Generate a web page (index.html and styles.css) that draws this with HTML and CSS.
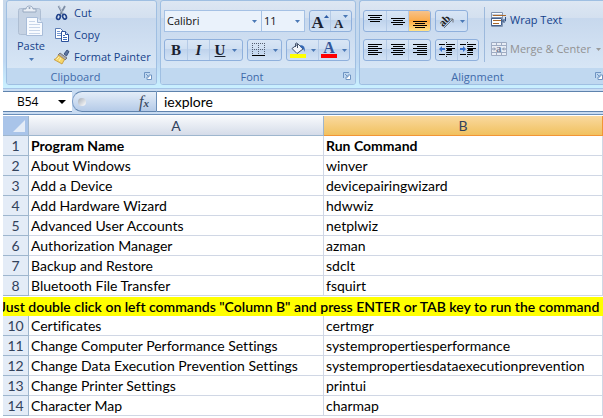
FILE: index.html
```html
<!DOCTYPE html>
<html lang="en">
<head>
<meta charset="utf-8">
<title>Run Commands</title>
<link rel="stylesheet" href="styles.css">
</head>
<body>
<svg width="0" height="0" class="defs" aria-hidden="true">
  <symbol id="arrow" viewBox="0 0 5 3"><path d="M0 0h5L2.500 3z"/></symbol>
  <symbol id="launcher" viewBox="0 0 8 8"><path d="M.5 6V.5H6" fill="none" stroke="#6f94c2"/><path d="M2 2l2.500 2.500" stroke="#6f94c2"/><path d="M7.500 3v4.500H3V5h2V3z" fill="#fff" stroke="#6f94c2"/></symbol>
</svg>
<main class="app">
  <header class="ribbon">
    <section class="group">
      <div class="tools clipboard">
        <button class="paste">
          <svg width="28" height="32" viewBox="0 0 28 32"><rect x="1.500" y="3.500" width="22" height="26" rx="2" fill="#c5d2e3" stroke="#aebed3"/><path d="M6 7V4h3c0-4 7-4 7 0h3v3z" fill="#e9eef5" stroke="#98a9c0"/><circle cx="12.500" cy="3" r="1" fill="#8fa1b8"/><path d="M9.500 12.500h11l5 5v13h-16z" fill="#f8fbff" stroke="#a9bdd9"/><path d="M20.500 12.500v5h5" fill="#dfe9f6" stroke="#a9bdd9"/><path d="M12 16.500h6M12 19.500h11M12 22.500h11M12 25.500h11M12 28.500h11" stroke="#c8d6ea"/></svg>
          <span>Paste</span>
          <svg class="arrow" width="5" height="3"><use href="#arrow"/></svg>
        </button>
        <div class="stack">
          <button class="item"><svg width="16" height="16" viewBox="0 0 16 16"><path d="M4.500 1l5 9M11 1L6 10" stroke="#7d8da5" stroke-width="1.800"/><path d="M5 1l4.500 8" stroke="#dfe6ef" stroke-width=".6"/><ellipse cx="4.500" cy="12" rx="1.800" ry="2.500" fill="none" stroke="#21428a" stroke-width="1.600" transform="rotate(20 4.500 12)"/><ellipse cx="10.500" cy="11.700" rx="1.800" ry="2.500" fill="none" stroke="#21428a" stroke-width="1.600" transform="rotate(-25 10.500 11.700)"/></svg>Cut</button>
          <button class="item"><svg width="16" height="16" viewBox="0 0 16 16"><path d="M1.500 1.500h5l3 3v7h-8z" fill="#fff" stroke="#5c7db5"/><path d="M3 4.500h3M3 6.500h4M3 8.500h4" stroke="#7598d0"/><path d="M7.500 4.500h4l3 3v7h-7z" fill="#fff" stroke="#2c529c"/><path d="M11.500 4.500v3h3" fill="#cfe0f7" stroke="#2c529c"/><path d="M9 8.500h2M9 10.500h4M9 12.500h4" stroke="#3e6cb8"/></svg>Copy</button>
          <button class="item"><svg width="16" height="16" viewBox="0 0 16 16"><path d="M10 5l3-4 2 1.500-2.500 4.500z" fill="#6077a0" stroke="#263d6c" stroke-width=".8"/><path d="M6 4l7 5-2 2-7-5z" fill="#a9a9ad" stroke="#656269" stroke-width=".8"/><path d="M4.500 6l6 4.500L8 15 0 10.500C2 10 3.500 8 4.500 6z" fill="#f5d66c" stroke="#c59535" stroke-width=".8"/><path d="M2.500 10.500L5 8M5 12l2-3" stroke="#fff2b5"/></svg>Format Painter</button>
        </div>
      </div>
      <footer class="caption"><span>Clipboard</span><svg width="8" height="8"><use href="#launcher"/></svg></footer>
    </section>

    <section class="group">
      <div class="tools rows">
        <div class="row">
          <div class="combos">
            <label class="combo face"><select aria-label="Font"><option>Calibri</option></select><svg class="arrow" width="5" height="3"><use href="#arrow"/></svg></label>
            <label class="combo size"><select aria-label="Font size"><option>11</option></select><svg class="arrow" width="5" height="3"><use href="#arrow"/></svg></label>
          </div>
          <div class="set">
            <button class="cell slim" aria-label="Grow font"><span class="serif big">A</span><svg class="mark" width="5" height="3" viewBox="0 0 5 3"><path d="M0 3h5L2.500 0z" fill="#2d5ba4"/></svg></button>
            <button class="cell slim" aria-label="Shrink font"><span class="serif small">A</span><svg class="mark" width="5" height="3"><use href="#arrow"/></svg></button>
          </div>
        </div>
        <div class="row">
          <div class="set">
            <button class="cell serif" aria-label="Bold"><b>B</b></button>
            <button class="cell serif" aria-label="Italic"><i>I</i></button>
            <button class="cell serif wide" aria-label="Underline"><u>U</u><svg class="arrow" width="5" height="3"><use href="#arrow"/></svg></button>
          </div>
          <div class="set">
            <button class="cell wide" aria-label="Borders"><svg width="14" height="14" viewBox="0 0 14 14"><path d="M.5 0v12M6.500 0v12M12.500 0v12M0 .5h13M0 6.500h13" stroke="#555f70" stroke-dasharray="1 1" fill="none"/><path d="M0 12.500h13" stroke="#000"/></svg><svg class="arrow" width="5" height="3"><use href="#arrow"/></svg></button>
          </div>
          <div class="set">
            <button class="cell wide tight" aria-label="Fill color"><svg width="16" height="16" viewBox="0 0 16 16"><path d="M2 6.500L8 2l5 5-6 4.500z" fill="#f4f7fc" stroke="#44536c"/><path d="M7.500 6V1.500Q6 0 5.500 2v3" fill="none" stroke="#44536c"/><path d="M10 3q6 0 4.500 7-1-4-3.500-4z" fill="#3367b4"/><path d="M0 12h16v4H0z" fill="#ff0"/></svg><svg class="arrow" width="5" height="3"><use href="#arrow"/></svg></button>
            <button class="cell wide tight" aria-label="Font color"><span class="ink serif">A</span><svg class="arrow" width="5" height="3"><use href="#arrow"/></svg></button>
          </div>
        </div>
      </div>
      <footer class="caption"><span>Font</span><svg width="8" height="8"><use href="#launcher"/></svg></footer>
    </section>

    <section class="group last">
      <div class="tools split">
        <div class="rows">
          <div class="row">
            <div class="set">
              <button class="cell" aria-label="Top align"><svg width="16" height="16" viewBox="0 0 16 16"><path d="M1 2.500h14M3 4.500h10M1 6.500h14M3 8.500h10" stroke="#000"/></svg></button>
              <button class="cell" aria-label="Middle align"><svg width="16" height="16" viewBox="0 0 16 16"><path d="M1 5.500h14M3 7.500h10M1 9.500h14M3 11.500h10" stroke="#000"/></svg></button>
              <button class="cell active" aria-label="Bottom align" aria-pressed="true"><svg width="16" height="16" viewBox="0 0 16 16"><path d="M1 8.500h14M3 10.500h10M1 12.500h14M3 14.500h10" stroke="#000"/></svg></button>
            </div>
            <div class="set">
              <button class="cell wide tight" aria-label="Orientation"><svg width="16" height="16" viewBox="0 0 16 16"><text class="slant" x="0" y="11" transform="rotate(-45 6 8)">ab</text><path d="M5 15L14 6M10.500 6H14v3.500" fill="none" stroke="#6c7179"/></svg><svg class="arrow" width="5" height="3"><use href="#arrow"/></svg></button>
            </div>
          </div>
          <div class="row">
            <div class="set">
              <button class="cell" aria-label="Align left"><svg width="16" height="16" viewBox="0 0 16 16"><path d="M1 2.500h14M1 4.500h10M1 6.500h14M1 8.500h10M1 10.500h14M1 12.500h10" stroke="#000"/></svg></button>
              <button class="cell" aria-label="Center"><svg width="16" height="16" viewBox="0 0 16 16"><path d="M1 2.500h14M3 4.500h10M1 6.500h14M3 8.500h10M1 10.500h14M3 12.500h10" stroke="#000"/></svg></button>
              <button class="cell" aria-label="Align right"><svg width="16" height="16" viewBox="0 0 16 16"><path d="M1 2.500h14M5 4.500h10M1 6.500h14M5 8.500h10M1 10.500h14M5 12.500h10" stroke="#000"/></svg></button>
            </div>
            <div class="set">
              <button class="cell slim" aria-label="Decrease indent"><svg width="16" height="16" viewBox="0 0 16 16"><path d="M0 2.500h6M8 2.500h8M8 4.500h5M8 10.500h5M0 12.500h6M8 12.500h5" stroke="#000"/><path d="M8 6h8v1H8zM8 7h5v2H8z"/><path d="M7.500 0v16" stroke="#222" stroke-dasharray="1 1"/><path d="M0 7l3-3v2h3v2H3v2z" fill="#3770cc"/></svg></button>
              <button class="cell slim" aria-label="Increase indent"><svg width="16" height="16" viewBox="0 0 16 16"><path d="M0 2.500h6M8 2.500h8M8 4.500h5M8 10.500h5M0 12.500h6M8 12.500h5" stroke="#000"/><path d="M8 6h8v1H8zM8 7h5v2H8z"/><path d="M7.500 0v16" stroke="#222" stroke-dasharray="1 1"/><path d="M6 7L3 4v2H0v2h3v2z" fill="#3770cc"/></svg></button>
            </div>
          </div>
        </div>
        <div class="rows words">
          <button class="item"><svg width="16" height="16" viewBox="0 0 16 16"><path d="M.5.500h11v14H.5zM.5 5.500h11M.5 3h11" fill="#fff" stroke="#8396b2"/><path d="M2 3.500h13M2 8.500h8M2 11.500h6" stroke="#a9682c"/><path d="M.5 6.500h10v7H.5z" fill="none" stroke="#44618f"/><path d="M14.500 5v4H12M13.500 7l-2 2 2 2" fill="none" stroke="#33517f"/></svg>Wrap Text</button>
          <button class="item" disabled><svg width="16" height="16" viewBox="0 0 16 16"><path d="M.5 1.500h15v13H.5zM.5 4.500h15M.5 11.500h15M5.500 1.500v3M10.500 1.500v3M5.500 11.500v3M10.500 11.500v3" fill="#e8edf5" stroke="#9facc3"/><path d="M1 8h3M15 8h-3M3 6.500L4.500 8 3 9.500M13 6.500L11.500 8l1.500 1.500" fill="none" stroke="#8290aa"/><text class="merge" x="5" y="11">a</text></svg>Merge &amp; Center<svg class="arrow" width="5" height="3"><use href="#arrow"/></svg></button>
        </div>
      </div>
      <footer class="caption"><span>Alignment</span><svg width="8" height="8"><use href="#launcher"/></svg></footer>
    </section>
  </header>

  <div class="formula">
    <label class="name"><input aria-label="Name box" value="B54"><svg width="8" height="4" viewBox="0 0 8 4"><path d="M0 0h8L4 4z"/></svg></label>
    <div class="fx"><span class="dot"></span><button aria-label="Insert function"><i>f</i><small>x</small></button></div>
    <input class="entry" aria-label="Formula" value="iexplore">
  </div>

  <table class="sheet">
    <colgroup><col class="nums"><col class="first"><col></colgroup>
    <thead><tr><th class="corner"><svg width="12" height="12" viewBox="0 0 12 12"><path d="M12 0v12H0z" fill="#e4ecf7"/></svg></th><th>A</th><th class="chosen">B</th></tr></thead>
    <tbody>
      <tr class="titles"><th>1</th><td>Program Name</td><td>Run Command</td></tr>
      <tr><th>2</th><td>About Windows</td><td>winver</td></tr>
      <tr><th>3</th><td>Add a Device</td><td>devicepairingwizard</td></tr>
      <tr><th>4</th><td>Add Hardware Wizard</td><td>hdwwiz</td></tr>
      <tr><th>5</th><td>Advanced User Accounts</td><td>netplwiz</td></tr>
      <tr><th>6</th><td>Authorization Manager</td><td>azman</td></tr>
      <tr><th>7</th><td>Backup and Restore</td><td>sdclt</td></tr>
      <tr><th>8</th><td>Bluetooth File Transfer</td><td>fsquirt</td></tr>
      <tr class="banner"><td colspan="3"><div>Just double click on left commands "Column B" and press ENTER or TAB key to run the command</div></td></tr>
      <tr><th>10</th><td>Certificates</td><td>certmgr</td></tr>
      <tr><th>11</th><td>Change Computer Performance Settings</td><td>systempropertiesperformance</td></tr>
      <tr><th>12</th><td>Change Data Execution Prevention Settings</td><td>systempropertiesdataexecutionprevention</td></tr>
      <tr><th>13</th><td>Change Printer Settings</td><td>printui</td></tr>
      <tr><th>14</th><td>Character Map</td><td>charmap</td></tr>
    </tbody>
  </table>
</main>
</body>
</html>
```
FILE: styles.css
```css
* { box-sizing: border-box; }
body { margin: 0; background: #fff; font: 12px/16px "Open Sans", "Noto Sans", sans-serif; overflow: hidden; }
button, input, select { font: inherit; color: inherit; margin: 0; padding: 0; border: 0; background: none; }
svg { display: block; flex: none; }
.defs { position: absolute; }
.arrow, .mark { fill: #4a78b5; }
.app { margin-left: 3px; overflow: hidden; }

.ribbon {
  display: grid; grid-template-columns: 151px 196px 1fr; gap: 3px;
  padding: 0 0 3px 3px; border-bottom: 1px solid #a5c3e6;
  background: linear-gradient(#c8d8ea, #bfd8f2 70%, #c9f0ff);
  color: #15428b;
}
.group {
  display: flex; flex-direction: column; overflow: hidden;
  border: 1px solid #9fbfe2; border-radius: 3px;
  background: linear-gradient(#dde7f3, #d4e0ef 20%, #c7d8ed 21%, #dceaf8);
}
.group.last { border-right: 0; border-radius: 3px 0 0 3px; }
.tools { height: 67px; }
.caption { display: flex; align-items: center; height: 16px; padding: 0 4px 0 0; background: #c0d8f0; color: #3e6aaa; }
.caption span { flex: 1; text-align: center; line-height: 15px; font-size: 11px; }
.last .caption { padding-right: 0; }

.clipboard { display: flex; gap: 6px; padding-left: 7px; }
.paste { display: flex; flex-direction: column; align-items: center; padding-top: 4px; width: 34px; }
.paste span { margin: 1px 0 4px; font-size: 11px; }
.stack { display: flex; flex-direction: column; gap: 6px; padding-top: 4px; }
.item { display: flex; align-items: center; gap: 4px; height: 16px; font-size: 11px; white-space: nowrap; }
.item:disabled { color: #929292; }
.item:disabled .arrow { fill: #9a9a9a; }

.rows { display: flex; flex-direction: column; gap: 7px; padding: 9px 3px 0; }
.row { display: flex; gap: 4px; }
.split { display: flex; }
.split > .rows { padding-left: 3px; }
.combos { display: flex; height: 22px; border: 1px solid #a5c1e4; background: #eaf2fb; color: #111; font-size: 11px; }
.combo { position: relative; display: flex; }
.combo select { appearance: none; width: 100%; padding-left: 2px; }
.combo .arrow { position: absolute; right: 4px; top: 9px; }
.face { width: 96px; }
.size { width: 43px; border-left: 1px solid #a5c1e4; }
.set { display: flex; height: 22px; border: 1px solid #8fb0dc; border-radius: 3px; overflow: hidden; background: linear-gradient(#d9e6f5, #cfdff2 45%, #bfd3ec 46%, #d2e2f5); }
.cell { display: flex; align-items: center; justify-content: center; gap: 7px; width: 22px; }
.cell + .cell { border-left: 1px solid #b4cae6; }
.rows .cell.wide { width: 33px; }
.rows .cell.tight { gap: 5px; width: 31px; }
.cell.slim { width: 21px; }
.active { background: linear-gradient(#f6c28a, #fbad50 45%, #fda63a 46%, #ffe38a); }
.serif { font: 15px/18px "Liberation Serif", serif; color: #1b2230; }
.serif i { font-weight: bold; }
.serif u { font-weight: bold; }
.cell:has(.mark) { align-items: flex-start; gap: 0; padding-top: 4px; }
.big, .small { font-weight: bold; font-size: 17px; line-height: 16px; }
.small { font-size: 13px; line-height: 18px; }
.ink { border-bottom: 4px solid #f00; width: 16px; height: 16px; line-height: 12px; font-weight: bold; font-size: 16px; color: #33569a; }
.slant { font: bold 11px "Liberation Serif", serif; fill: #222; }
.merge { font: bold 11px "Liberation Serif", serif; fill: #74829c; }
.words { margin: 6px 0 6px 2px; padding: 5px 0 0; gap: 13px; border-left: 1px solid #9cb9dc; }
.split > .words { padding-left: 6px; }
.words .item { gap: 3px; }
.words .arrow { margin-left: 2px; }

.formula { display: flex; height: 26px; padding: 2px 0; margin-bottom: 1px; background: #c9dcf2; border-bottom: 1px solid #6b8fb9; font: 14px/20px Lato, sans-serif; color: #000; }
.formula > * { background: #fff; border-top: 1px solid #5f83ad; border-bottom: 1px solid #5f83ad; }
.name { display: flex; align-items: center; width: 69px; padding: 0 6px 0 14px; font: 12px/18px "Open Sans", sans-serif; }
.name input { flex: 1; min-width: 0; }
.fx { display: flex; align-items: center; justify-content: space-between; width: 85px; padding: 0 7px 0 5px; border-left: 1px solid #7f9fc8; border-right: 1px solid #6b8fb9; border-radius: 10px 0 0 10px; }
.formula .fx { background: linear-gradient(#e4edf8, #b5cbe8); }
.dot { width: 8px; height: 8px; border-radius: 50%; background: linear-gradient(135deg, #a5adb8, #fff); }
.fx button { font: 16px/18px "Liberation Serif", serif; color: #3b4a63; }
.fx small { font: italic bold 11px "Liberation Serif", serif; }
.entry { flex: 1; min-width: 0; padding-left: 7px; }

.sheet { width: 100%; table-layout: fixed; border-collapse: separate; border-spacing: 0; font: 14px/19px Lato, sans-serif; font-variant-ligatures: none; color: #000; }
.nums { width: 26px; }
.first { width: 295px; }
.sheet th, .sheet td { height: 20px; padding: 0; overflow: hidden; white-space: nowrap; border-right: 1px solid #d0d7e5; border-bottom: 1px solid #d0d7e5; }
.sheet td { text-align: left; padding-left: 2px; }
.sheet th { font-weight: normal; color: #32425c; background: #e4ecf7; border-color: #9eb6ce; }
.sheet thead th { background: linear-gradient(#f8fafc, #d5dce9); }
.sheet .corner { background: #a9c4e9; vertical-align: bottom; padding: 0 3px 3px 10px; }
.sheet .chosen { background: linear-gradient(#f9d99f, #f1c15f); border-color: #f29536; }
.titles td { font-weight: bold; }
.sheet .banner td { padding: 1px 0 0; border: 0; }
.banner div { background: #ff0; font-weight: 600; text-indent: -3px; }
```
